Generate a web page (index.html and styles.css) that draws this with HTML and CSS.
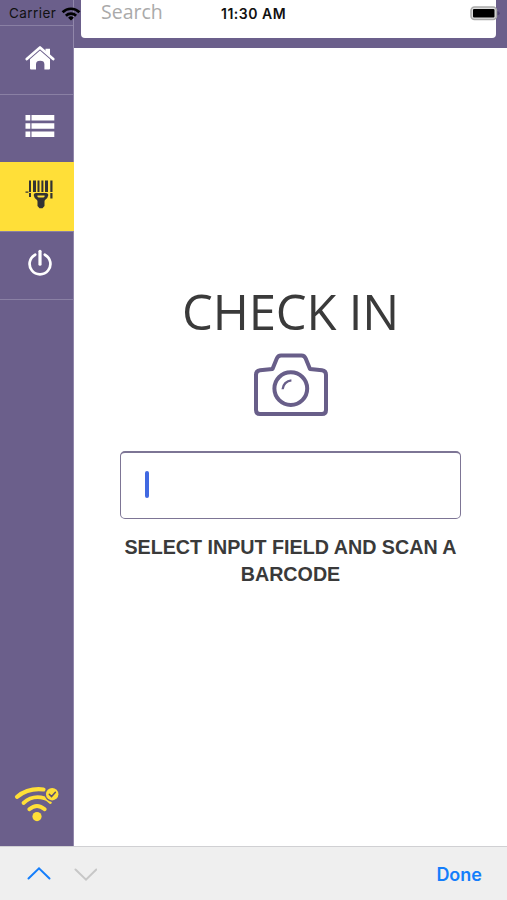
FILE: index.html
```html
<!DOCTYPE html>
<html lang="en">
<head>
<title>Check in</title>
<meta charset="utf-8">
<meta name="viewport" content="width=device-width, initial-scale=1">
<link rel="stylesheet" href="styles.css">
</head>

<body>

<!-- phone status bar, sits on top of everything -->
<div id="status">
	<span class="carrier">Carrier</span>
	<svg class="signal" width="20" height="14" viewBox="0 0 20 14">
		<g fill="none" stroke="#000" stroke-width="2.7">
			<path d="M1.6 5.2a12 12 0 0 1 16.8 0"/>
			<path d="M4.9 8.7a7.3 7.3 0 0 1 10.2 0"/>
		</g>
		<path d="M10 13.6l-2.9-2.9a4.2 4.2 0 0 1 5.8 0z"/>
	</svg>
	<span class="time">11:30 AM</span>
	<svg class="battery" width="31" height="15" viewBox="0 0 31 15">
		<rect x="2" y="1" width="25.500" height="12.600" rx="3.5" fill="#ddd" stroke="#aaa" stroke-width="1.500"/>
		<rect x="4" y="3" width="21.500" height="8.600" rx="1"/>
		<path d="M28.500 5q2.200.8 2.200 2.300t-2.200 2.300z" fill="#514671"/>
	</svg>
</div>

<div id="app">
	<nav id="sidebar">
		<a class="item" href="#">
			<svg width="30" height="26" viewBox="0 0 30 26">
				<path d="M1.8 14L15 2.4 28.2 14" fill="none" stroke="#fff" stroke-width="2.7" stroke-linecap="round" stroke-linejoin="round"/>
				<path d="M20.500 3.800h4.500v7l-4.500-3.600z" fill="#fff"/>
				<path d="M5 14.2L15 5.6l10 8.6v9.2q0 1-1 1h-4.600v-5.200q0-3.400-4.200-3.400T11 19.200v5.200H6q-1 0-1-1z" fill="#fff"/>
			</svg>
		</a>
		<a class="item" href="#">
			<svg width="30" height="24" viewBox="0 0 30 24">
				<path fill="#fff" d="M.5 1h4.800v5.500H.5zM6.500 1h22.800v5.500H6.500zM.5 9.200h4.800v5.500H.5zM6.500 9.200h22.800v5.500H6.500zM.5 17.400h4.800v5.500H.5zM6.500 17.400h22.800v5.500H6.500z"/>
			</svg>
		</a>
		<a class="item active" href="#">
			<svg width="30" height="30" viewBox="0 0 30 30">
				<g fill="#333">
					<path d="M4 .5h2v11.500H4zM8 .5h3v11.500H8zM12.500.5h2v11.500h-2zM16.400.5h2v11.500h-2zM20 .5h3v11.500h-3zM25.300.5h2.200v11.500h-2.200z"/>
					<path d="M4 13h2v4H4zM25.300 13h2.200v5.500h-2.200zM.5 11.500h3v1.200h-3z"/>
					<path fill-rule="evenodd" d="M11 13h10q2.500 0 2.200 2.500-.3 2.500-2.900 4.200-.8.600-.8 1.800v4.600l-2 2.100h-3l-2-2.100v-4.600q0-1.200-.8-1.800-2.600-1.700-2.900-4.200Q8.500 13 11 13zM12.800 15.500q-.8 0-.4 1 .3.900 1.500.9h4.200q1.200 0 1.500-.9.400-1-.4-1z"/>
				</g>
			</svg>
		</a>
		<a class="item" href="#">
			<svg width="26" height="28" viewBox="0 0 26 28" fill="none" stroke="#fff" stroke-linecap="round">
				<path d="M8.200 5.700a10.400 10.400 0 1 0 9.600 0" stroke-width="2.700"/>
				<path d="M13 2.300v12.900" stroke-width="3.200"/>
			</svg>
		</a>
		<div class="online">
			<svg width="46" height="38" viewBox="0 0 46 38" fill="none" stroke="#ffdf38" stroke-linecap="round">
				<path d="M3 11.800Q14.500 2.700 29.500 4.500" stroke-width="4.200"/>
				<path d="M9.500 18Q18.800 9.500 30.500 13.300" stroke-width="3.800"/>
				<path d="M30 13.400q3.500 1.400 6.500 4.300" stroke-width="2.600"/>
				<path d="M15.300 24.300q7.700-6.600 15.400 0" stroke-width="3.900"/>
				<circle cx="23" cy="31.600" r="4.600" fill="#ffdf38" stroke="none"/>
				<circle cx="38.200" cy="9.200" r="7.600" fill="#6b5f8b" stroke="none"/>
				<circle cx="38.200" cy="9.200" r="6.200" fill="#ffdf38" stroke="none"/>
				<path d="M35.300 9.300l2.200 2.300 3.900-4.300" stroke="#5c5070" stroke-width="1.500"/>
			</svg>
		</div>
	</nav>

	<div id="content">
		<header><div class="search">Search</div></header>
		<main>
			<h1>CHECK IN</h1>
			<svg class="camera" width="76" height="66" viewBox="0 0 76 66" fill="none" stroke="#685e89" stroke-width="4">
				<path d="M7 18.200l12.500-1.300L23.800 6.500Q25 3.500 28 3.500h20.500Q51.500 3.500 52.700 6.500L57 16.900l12 1.300q4 .5 4 4.500V58q0 4-4 4H7Q3 62 3 58V22.700q0-4 4-4.500z" stroke-linejoin="round"/>
				<circle cx="37.800" cy="36.600" r="16.400"/>
				<path d="M29.600 37.300a9.600 9.600 0 0 1 8.800-9" stroke-width="2.300"/>
			</svg>
			<div class="field"><span class="caret"></span></div>
			<p>SELECT INPUT FIELD AND SCAN A BARCODE</p>
		</main>
	</div>
</div>

<div id="toolbar">
	<svg width="70" height="16" viewBox="0 0 70 16" fill="none" stroke-width="2" stroke-linecap="round">
		<path d="M1.500 12.500L12 2.300l10.500 10.200" stroke="#147efb"/>
		<path d="M48.500 3.500L59 13.700 69.300 3.500" stroke="#c7c7c7"/>
	</svg>
	<span class="done">Done</span>
</div>

</body>
</html>
```
FILE: styles.css
```css
* { box-sizing: border-box; }

body {
	margin: 0;
	height: 900px;
	display: flex;
	flex-direction: column;
	overflow: hidden;
	background: #fff;
	color: #3a3a3a;
	font-family: "Open Sans", sans-serif;
}

/* status bar */
#status {
	position: absolute;
	top: 0;
	left: 0;
	width: 100%;
	height: 27px;
	padding: 0 7px 0 9px;
	display: flex;
	align-items: center;
	z-index: 1;
	color: #111;
	font: 13px/27px Inter, sans-serif;
}

#status .carrier {
	width: 52px;
	font-size: 13.5px;
	letter-spacing: 0.45px;
	white-space: nowrap;
}

#status .time {
	flex: 1;
	margin-left: 140px;
	font-weight: 600;
	font-size: 14px;
	letter-spacing: 0.5px;
}

/* layout */
#app {
	flex: 1;
	display: flex;
	min-height: 0;
}

#sidebar {
	width: 74px;
	padding-top: 25px;
	display: flex;
	flex-direction: column;
	background: #6b5f8b;
	border-right: 1px solid #9187aa;
}

#sidebar .item {
	height: 68.5px;
	padding: 0 0 4px 6px;
	display: flex;
	align-items: center;
	justify-content: center;
	border-top: 1px solid #8a80a4;
}

#sidebar .item.active {
	margin-right: -1px;
	background: #ffdf38;
	border-color: #ffdf38;
}

#sidebar .item:nth-child(4) {
	height: 69.5px;
	border-bottom: 1px solid #8a80a4;
}

#sidebar .online {
	margin-top: auto;
	height: 61px;
	text-align: center;
}

#content {
	flex: 1;
	display: flex;
	flex-direction: column;
}

header {
	height: 48px;
	padding: 0 11px 10px 7px;
	background: #6b5f8b;
}

header .search {
	height: 38px;
	padding-left: 20px;
	border-radius: 0 0 4px 4px;
	background: #fff;
	color: #aaa;
	font-size: 19.5px;
	line-height: 23px;
}

main {
	flex: 1;
	padding: 230px 46px 0;
	display: flex;
	flex-direction: column;
	align-items: center;
}

h1 {
	margin: 0;
	font-weight: 400;
	font-size: 49px;
	line-height: 66px;
	letter-spacing: -0.2px;
}

.camera { margin-top: 8px; }

.field {
	width: 341px;
	height: 68px;
	margin-top: 33px;
	padding: 18px 24px;
	border: 1px solid #7d7595;
	border-top-width: 2px;
	border-radius: 5px;
}

.caret {
	display: block;
	width: 4px;
	height: 27px;
	border-radius: 2px;
	background: #4169e1;
}

main p {
	margin: 15px 0 0;
	font: bold 19.7px/27px "Liberation Sans", Arial, sans-serif;
	text-align: center;
}

/* keyboard accessory bar */
#toolbar {
	height: 54px;
	padding: 0 25px 0 27px;
	display: flex;
	align-items: center;
	justify-content: space-between;
	background: #efefef;
	border-top: 1px solid #d0d0d3;
}

#toolbar .done {
	padding-top: 1px;
	color: #147efb;
	font: 600 18px Inter, sans-serif;
}
```
